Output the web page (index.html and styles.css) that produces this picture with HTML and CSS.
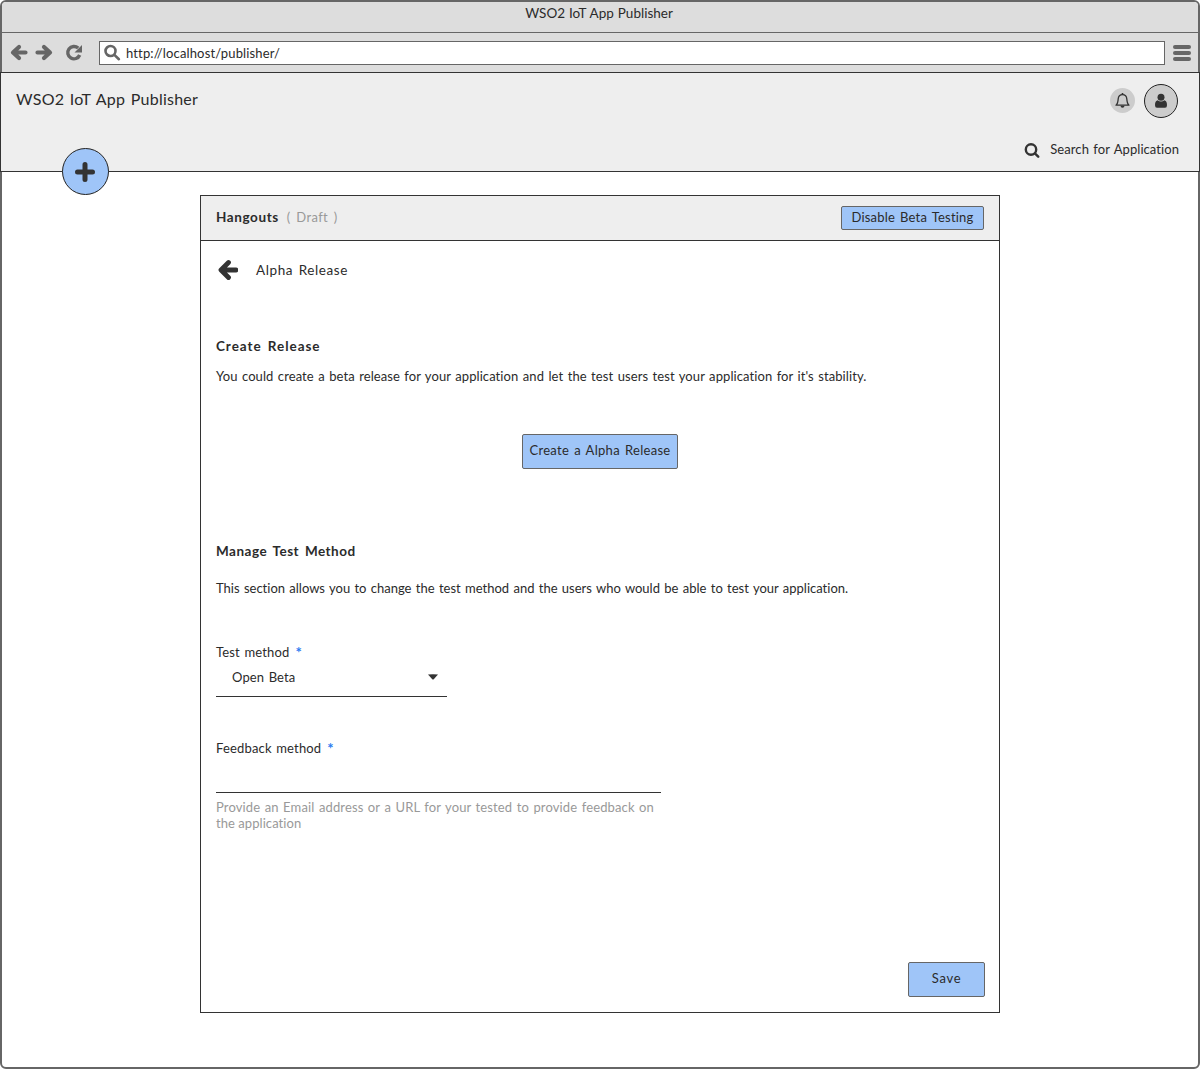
FILE: index.html
```html
<!DOCTYPE html>
<html lang="en">
<head>
<meta charset="utf-8">
<title>WSO2 IoT App Publisher</title>
<link rel="stylesheet" href="styles.css">
</head>
<body>
<div class="window">
  <div class="titlebar"><span class="t window-title">WSO2 IoT App Publisher</span></div>
  <div class="toolbar">
    <svg class="nav" width="18" height="18" viewBox="0 0 18 18"><path d="M9 3 3 8.500l6 5.500M4 8.500h11.500"/></svg>
    <svg class="nav forward" width="18" height="18" viewBox="0 0 18 18"><path d="M9 3l6 5.500-6 5.500M14 8.500H2.500"/></svg>
    <svg class="nav reload" width="18" height="18" viewBox="0 0 18 18"><path class="arc" d="M13.200 4.100A6.200 6.200 0 1 0 14.700 11"/><path class="tip" d="M17 1V8.500H9.500Z"/></svg>
    <div class="address">
      <svg width="18" height="18" viewBox="0 0 18 18"><circle cx="6.500" cy="7" r="5"/><path d="M10.400 10.900l4.500 4.300"/></svg>
      <span class="t url">http://localhost/publisher/</span>
    </div>
    <div class="menu"><i></i><i></i><i></i></div>
  </div>
  <header class="header">
    <div class="header-top">
      <h1 class="t brand">WSO2 IoT App Publisher</h1>
      <div class="account">
        <span class="bell"><svg width="17" height="17" viewBox="0 0 17 17"><path class="line" d="M2 13.200C3.800 11.700 4 9.800 4.200 6.900C4.400 4.300 6 2.700 8.500 2.700s4.100 1.600 4.300 4.200c.2 2.900.4 4.800 2.200 6.300Z"/><path class="solid" d="M7.700 1h1.600v2H7.700ZM6.500 13.800h4a2 2 0 0 1-4 0Z"/></svg></span>
        <span class="avatar"><svg width="14" height="16" viewBox="0 0 14 16"><circle cx="7" cy="4.300" r="3.500"/><path d="M3.500 7.200Q7 9.800 10.500 7.200C12.400 7.700 13 9.700 13 12.300Q13 14.800 11 14.800H3Q1 14.800 1 12.300C1 9.700 1.600 7.700 3.500 7.200Z"/></svg></span>
      </div>
    </div>
    <div class="search">
      <svg width="16" height="16" viewBox="0 0 16 16"><circle cx="7" cy="7.500" r="5.200"/><path d="M10.900 11.400l3.300 3.300"/></svg>
      <span class="t search-label">Search for Application</span>
    </div>
    <button class="add"><svg width="20" height="20" viewBox="0 0 20 20"><path d="M10 2.500v15M2.500 10h15"/></svg></button>
  </header>
  <main class="panel">
    <div class="panel-head">
      <strong class="t app-name">Hangouts</strong><span class="t status">( Draft )</span>
      <button class="btn btn-disable"><span class="t disable-label">Disable Beta Testing</span></button>
    </div>
    <div class="panel-body">
      <div class="back">
        <svg width="22" height="22" viewBox="0 0 22 22"><path d="M12.500 3.500 5 11l7.500 7.500M6 11h14"/></svg>
        <span class="t back-label">Alpha Release</span>
      </div>
      <section class="release">
        <h2 class="t release-title">Create Release</h2>
        <p class="t release-text">You could create a beta release for your application and let the test users test your application for it's stability.</p>
        <button class="btn btn-create"><span class="t create-label">Create a Alpha Release</span></button>
      </section>
      <section class="method">
        <h2 class="t method-title">Manage Test Method</h2>
        <p class="t method-text">This section allows you to change the test method and the users who would be able to test your application.</p>
        <div class="label"><span class="t test-label">Test method</span><span class="star">*</span></div>
        <div class="select"><span class="t select-value">Open Beta</span><svg width="10" height="6" viewBox="0 0 10 6"><path class="caret" d="M0 .5Q5 0 10 .5L5.500 5.500h-1Z"/></svg></div>
        <div class="label feedback"><span class="t feedback-label">Feedback method</span><span class="star">*</span></div>
        <div class="input"></div>
        <p class="hint"><span class="t hint-main">Provide an Email address or a URL for your tested to provide feedback on</span><br><span class="t hint-rest">the application</span></p>
      </section>
      <button class="btn btn-save"><span class="t save-label">Save</span></button>
    </div>
  </main>
</div>
</body>
</html>
```
FILE: styles.css
```css
* { box-sizing: border-box; }
body { margin: 0; background: #fff; color: #333; font: 13px/16px Lato, "Open Sans", sans-serif; font-variant-ligatures: none; }
h1, h2, p { margin: 0; }
button { font: inherit; color: inherit; padding: 0; }
svg { display: block; fill: none; stroke: #333; stroke-linecap: round; stroke-linejoin: round; flex: none; }
.t { white-space: nowrap; color: #2b2b2b; }

.window { height: 1069px; border: 2px solid #666; border-radius: 6px; }
.titlebar { height: 31px; padding: 3px 2px 0 0; background: #ddd; border-bottom: 1px solid #666; border-radius: 4px 4px 0 0; text-align: center; }
.window-title { font-size: 13.500px; word-spacing: .5px; }
.toolbar { display: flex; align-items: center; height: 39px; padding: 0 7px 0 8px; background: #ddd; }
.nav { stroke: #666; stroke-width: 4.200; }
.forward { margin-left: 7px; }
.reload { margin-left: 12px; }
.arc { stroke-width: 3.400; stroke-linecap: butt; }
.tip { fill: #666; stroke: none; }
.address { display: flex; align-items: center; flex: 1; height: 24px; margin: 0 8px 0 16px; padding-left: 4px; background: #fff; border: 1px solid #666; }
.address svg { stroke: #666; stroke-width: 2.600; }
.url { margin-left: 4px; letter-spacing: .14px; }
.menu { display: flex; flex-direction: column; gap: 2px; width: 18px; }
.menu i { height: 4px; background: #666; border-radius: 2px; }

.header { position: relative; height: 100px; margin: 0 -2px; padding: 10px 20px 0 15px; background: #eee; border: 1px solid #333; }
.header-top { display: flex; justify-content: space-between; height: 35px; }
.brand { font-size: 16px; line-height: 20px; font-weight: 400; margin-top: 6px; letter-spacing: .24px; word-spacing: 1.200px; }
.account { display: flex; align-items: center; gap: 9px; height: 35px; margin-right: 1px; }
.bell, .avatar { display: flex; align-items: center; justify-content: center; border-radius: 50%; background: #ccc; }
.bell { width: 25px; height: 25px; }
.bell .line { stroke-width: 1.300; }
.bell .solid, .avatar svg { fill: #333; stroke: none; }
.avatar { width: 34px; height: 34px; border: 1px solid #222; }
.search { display: flex; align-items: center; justify-content: flex-end; gap: 10px; margin-top: 23px; height: 18px; }
.search svg { stroke-width: 2.400; }
.search-label { margin-top: -2px; letter-spacing: .07px; word-spacing: 1px; }
.add { position: absolute; left: 60.500px; top: 75px; width: 47px; height: 47px; display: flex; align-items: center; justify-content: center; border: 1px solid #222; border-radius: 50%; background: #9fc5f8; }
.add svg { stroke-width: 5; }

.panel { width: 800px; height: 818px; margin: 23px 0 0 198px; border: 1px solid #333; }
.panel-head { display: flex; align-items: center; height: 45px; padding: 0 15px; background: #eee; border-bottom: 1px solid #333; }
.app-name { margin-top: -2px; font-size: 13.500px; letter-spacing: .6px; }
.status { margin: -2px 0 0 8px; color: #999; letter-spacing: .36px; word-spacing: 2px; }
.btn { display: flex; align-items: center; justify-content: center; padding-bottom: 3px; background: #9fc5f8; border: 1px solid #666; border-radius: 2px; }
.btn-disable { width: 143px; height: 24px; margin-left: auto; padding-bottom: 2px; }
.disable-label { letter-spacing: .2px; word-spacing: 1.500px; }
.panel-body { display: flex; flex-direction: column; height: 771px; padding: 18px 14px 15px 15px; }
.back { display: flex; align-items: center; height: 22px; gap: 18px; }
.back svg { stroke-width: 4.800; }
.back-label { font-size: 13.500px; letter-spacing: .6px; word-spacing: 1.500px; }
.release { margin: 56px 1px 0 0; }
h2 { font-size: 13.500px; line-height: 18px; }
.release-title { letter-spacing: .95px; word-spacing: 2px; }
.release-text { margin-top: 13px; letter-spacing: .085px; word-spacing: 1px; }
.btn-create { width: 156px; height: 35px; margin: 50px auto 0; }
.create-label { letter-spacing: .29px; word-spacing: 1.500px; }
.method { margin-top: 73px; }
.method-title { letter-spacing: .5px; word-spacing: 2px; }
.method-text { margin-top: 20px; word-spacing: 1px; }
.label { display: flex; gap: 6px; margin-top: 48px; height: 16px; }
.test-label, .feedback-label { letter-spacing: .17px; word-spacing: 1px; }
.star { font-size: 15px; font-weight: 700; color: #2a7bf0; }
.select { display: flex; align-items: center; justify-content: space-between; width: 231px; height: 37px; padding: 0 9px 2px 16px; border-bottom: 1px solid #333; }
.select-value { letter-spacing: .13px; word-spacing: 1px; }
.caret { fill: #333; stroke: none; }
.feedback { margin-top: 43px; }
.input { width: 445px; height: 37px; border-bottom: 1px solid #333; }
.hint { margin-top: 6px; }
.hint .t { color: #999; }
.hint-main { letter-spacing: .13px; word-spacing: 1px; }
.hint-rest { letter-spacing: .06px; }
.btn-save { width: 77px; height: 35px; margin: auto 0 0 auto; }
.save-label { letter-spacing: .7px; }
```
